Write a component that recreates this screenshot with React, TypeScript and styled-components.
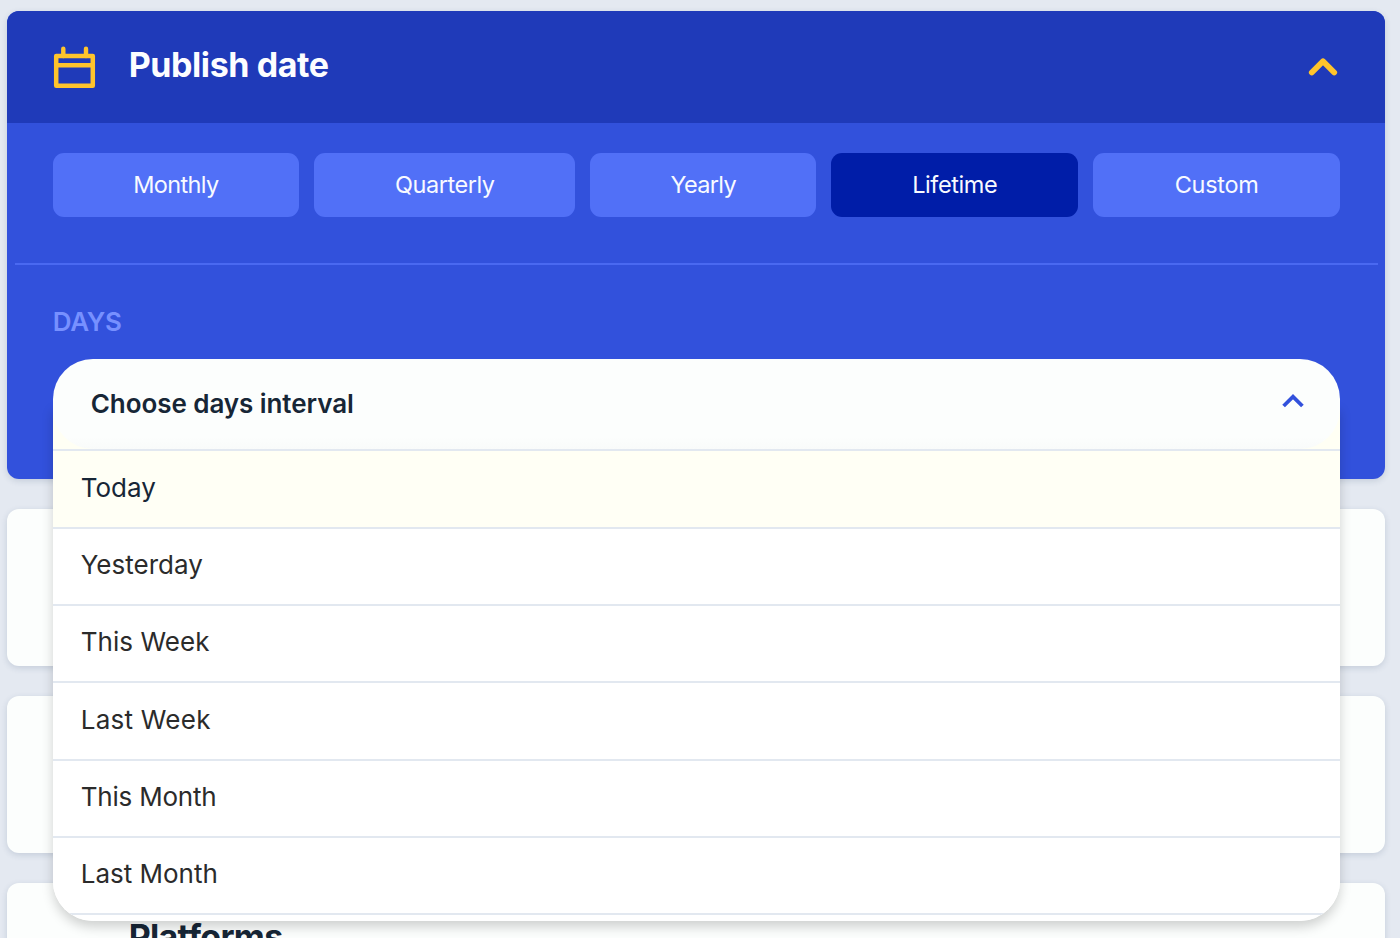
import React, { useState } from "react";
import styled, { createGlobalStyle } from "styled-components";

const GlobalStyle = createGlobalStyle`
  *, *::before, *::after { box-sizing: border-box; }
  html, body { margin: 0; height: 938px; overflow: hidden; background: #e4e9f1; }
  body { font-family: Inter, "Liberation Sans", sans-serif; }
  button { font: inherit; border: 0; cursor: pointer; }
`;

const Page = styled.main`
  display: flex;
  flex-direction: column;
  gap: 30.5px;
  height: 938px;
  padding: 11.4px 15px 0 7.4px;
  overflow: hidden;
  background: #e4e9f1;
`;

const Card = styled.section<{ $open?: boolean }>`
  flex: none;
  height: ${(p) => (p.$open ? "467.6px" : "156.5px")};
  border-radius: 12px;
  background: ${(p) => (p.$open ? "#3251dc" : "#fcfefd")};
  box-shadow: 0 2px 6px rgba(40, 60, 100, 0.16);
`;

const CardHeader = styled.header<{ $open?: boolean }>`
  display: flex;
  align-items: center;
  height: 111.5px;
  padding: 0 46.6px 0 45.3px;
  border-radius: 12px 12px 0 0;
  background: ${(p) => (p.$open ? "#1f3ab9" : "transparent")};
  color: ${(p) => (p.$open ? "#fcfdff" : "#172636")};
`;

const IconSlot = styled.span`
  display: flex;
  width: 76px;
  padding-top: 1px;
`;

const Title = styled.h2<{ $tracking: number }>`
  flex: 1;
  margin: 0;
  padding-bottom: 4.4px;
  font-size: 34px;
  line-height: 42px;
  font-weight: 700;
  letter-spacing: ${(p) => p.$tracking}px;
`;

const Periods = styled.div`
  display: grid;
  grid-template-columns: 246.2fr 261.2fr 225.5fr 247fr 246.5fr;
  gap: 15px;
  padding: 30px 45px 45.7px 45.3px;
`;

const Period = styled.button<{ $active: boolean; $tracking: number }>`
  height: 64px;
  padding: 0 0 1px;
  border-radius: 11px;
  background: ${(p) => (p.$active ? "#001da8" : "#5170f7")};
  color: #f8faff;
  font-size: 23.5px;
  letter-spacing: ${(p) => p.$tracking}px;
`;

const Divider = styled.hr`
  height: 2px;
  margin: 0 7.5px;
  border: 0;
  background: #4a69f1;
`;

const Field = styled.div`
  padding: 40.4px 45px 0 45.3px;
`;

const Label = styled.div`
  height: 53.7px;
  color: #7790ff;
  font-size: 26px;
  line-height: 34px;
  font-weight: 600;
  letter-spacing: -0.3px;
`;

const Select = styled.div`
  position: relative;
`;

const SelectButton = styled.button`
  position: relative;
  z-index: 2;
  display: flex;
  align-items: center;
  justify-content: space-between;
  width: 100%;
  height: 90px;
  padding: 0 36.5px 1px 38px;
  border-radius: 40px;
  background: linear-gradient(#fcfefd 86%, #f9fbfa);
  color: #172636;
  font-size: 26px;
  font-weight: 600;
  letter-spacing: -0.06px;

  svg {
    margin-bottom: 5px;
  }
`;

const Menu = styled.ul`
  position: absolute;
  z-index: 1;
  top: 46px;
  left: 0;
  right: 0;
  height: 516.5px;
  margin: 0;
  padding: 44.6px 0 0;
  overflow: hidden;
  list-style: none;
  border-radius: 0 0 40px 40px;
  background: linear-gradient(#fffff4 60px, #fff 60px);
  box-shadow: 0 6px 12px rgba(0, 0, 0, 0.18);
`;

const Option = styled.li<{ $active: boolean; $tracking: number }>`
  display: flex;
  align-items: center;
  height: 77.33px;
  padding: 0 28px 3.4px;
  border-top: 2px solid #e2e8f0;
  background: ${(p) => (p.$active ? "#fffff5" : "#fff")};
  color: ${(p) => (p.$active ? "#172636" : "#2b2b2b")};
  font-size: 26px;
  font-weight: 400;
  letter-spacing: ${(p) => p.$tracking}px;
`;

const MenuEnd = styled.li`
  height: 8px;
  border-top: 2px solid #e2e8f0;
`;

const CalendarIcon = () => (
  <svg width="44" height="44" viewBox="0 0 44 44" fill="none" stroke="#ffc42c">
    <path d="M3.2 10h36.6v29.8H3.2zM3.2 19.3h36.6" strokeWidth="4.5" strokeLinejoin="round" />
    <path d="M10.3 2.8V10M33 2.8V10" strokeWidth="4.4" strokeLinecap="round" />
  </svg>
);

const HeaderChevron = () => (
  <svg width="30" height="20" viewBox="0 0 30 20" fill="none" stroke="#ffc42c">
    <path d="M3.8 15.5 15 4.3l11.2 11.2" strokeWidth="5.8" strokeLinecap="round" strokeLinejoin="round" />
  </svg>
);

const SelectChevron = () => (
  <svg width="22" height="16" viewBox="0 0 22 16" fill="none" stroke="#3251dc">
    <path d="M1.6 13 11 3.6l9.4 9.4" strokeWidth="3.8" />
  </svg>
);

const periods = [
  { name: "Monthly", tracking: -0.65 },
  { name: "Quarterly", tracking: -0.45 },
  { name: "Yearly", tracking: -0.65 },
  { name: "Lifetime", tracking: -0.4 },
  { name: "Custom", tracking: -0.3 },
];

const days = [
  { name: "Today", tracking: 0 },
  { name: "Yesterday", tracking: 0 },
  { name: "This Week", tracking: 0.05 },
  { name: "Last Week", tracking: 0.25 },
  { name: "This Month", tracking: -0.2 },
  { name: "Last Month", tracking: 0 },
];

export default function App() {
  const [period, setPeriod] = useState("Lifetime");
  const [day, setDay] = useState("Today");
  return (
    <>
      <GlobalStyle />
      <Page>
        <Card $open>
          <CardHeader $open>
            <IconSlot>
              <CalendarIcon />
            </IconSlot>
            <Title $tracking={-0.42}>Publish date</Title>
            <HeaderChevron />
          </CardHeader>
          <Periods>
            {periods.map((p) => (
              <Period
                key={p.name}
                $active={p.name === period}
                $tracking={p.tracking}
                onClick={() => setPeriod(p.name)}
              >
                {p.name}
              </Period>
            ))}
          </Periods>
          <Divider />
          <Field>
            <Label>DAYS</Label>
            <Select>
              <SelectButton>
                Choose days interval
                <SelectChevron />
              </SelectButton>
              <Menu>
                {days.map((d) => (
                  <Option
                    key={d.name}
                    $active={d.name === day}
                    $tracking={d.tracking}
                    onClick={() => setDay(d.name)}
                  >
                    {d.name}
                  </Option>
                ))}
                <MenuEnd />
              </Menu>
            </Select>
          </Field>
        </Card>
        <Card />
        <Card />
        <Card>
          <CardHeader>
            <IconSlot />
            <Title $tracking={-0.7}>Platforms</Title>
          </CardHeader>
        </Card>
      </Page>
    </>
  );
}
